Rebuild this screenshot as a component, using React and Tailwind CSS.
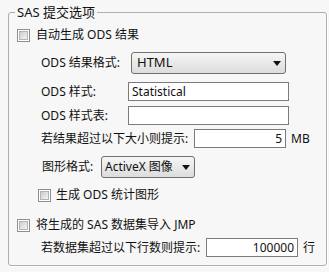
const font = { fontFamily: '"Noto Sans", "Noto Sans CJK SC", sans-serif' };

function Check() {
  return (
    <span className="flex h-[13px] w-[13px] shrink-0 items-center justify-center border border-[#8f8f8f] bg-white">
      <span className="h-[9px] w-[9px] border border-[#b4b4b4] bg-gradient-to-br from-[#cdcdcd] to-[#f4f4f4]" />
    </span>
  );
}

function Arrow() {
  return (
    <svg width="8" height="5" viewBox="0 0 8 5" className="shrink-0">
      <path d="M0 0h8L4 5z" fill="#111" />
    </svg>
  );
}

function Input({ value = "", right = false, className = "" }) {
  return (
    <div
      className={`flex h-[19px] items-center border border-[#7b7b7b] bg-white px-[3px] text-[12px] leading-none text-[#111] ${
        right ? "justify-end" : ""
      } ${className}`}
    >
      {value}
    </div>
  );
}

export default function App() {
  return (
    <div className="h-[272px] w-[329px] bg-[#f7f7f7] pt-[4px] pl-[8px] text-[12px] text-[#111]" style={font}>
      <fieldset className="h-[262px] w-[319px] rounded-[3px] border border-[#aeaeae] shadow-[1px_1px_0_#ffffff]">
        <legend className="ml-[6px] px-[2px] text-[13px] leading-[16px] text-[#111]">SAS 提交选项</legend>

        <div className="flex flex-col">
          <label className="mt-[7px] ml-[8px] flex h-[16px] items-center gap-[6px]">
            <Check />
            <span>自动生成 ODS 结果</span>
          </label>

          <div className="mt-[9px] ml-[32px] flex h-[22px] items-center">
            <span className="w-[90px]">ODS 结果格式:</span>
            <div className="flex h-[22px] w-[155px] items-center justify-between rounded-[3px] border border-[#707070] bg-gradient-to-b from-[#f6f6f6] to-[#dcdcdc] pr-[4px] pl-[5px]">
              <span className="text-[13px]">HTML</span>
              <Arrow />
            </div>
          </div>

          <div className="mt-[8px] ml-[32px] flex h-[19px] items-center">
            <span className="w-[87px]">ODS 样式:</span>
            <Input value="Statistical" className="w-[161px]" />
          </div>

          <div className="mt-[5px] ml-[32px] flex h-[19px] items-center">
            <span className="w-[87px]">ODS 样式表:</span>
            <Input className="w-[161px]" />
          </div>

          <div className="mt-[4px] ml-[32px] flex h-[19px] items-center">
            <span className="w-[153px]">若结果超过以下大小则提示:</span>
            <Input value="5" right className="w-[92px]" />
            <span className="ml-[5px]">MB</span>
          </div>

          <div className="mt-[8px] ml-[33px] flex h-[22px] items-center">
            <span className="w-[59px]">图形格式:</span>
            <div className="flex h-[22px] w-[94px] items-center justify-between rounded-[3px] border border-[#707070] bg-gradient-to-b from-[#f6f6f6] to-[#dcdcdc] pr-[4px] pl-[3px]">
              <span>ActiveX 图像</span>
              <Arrow />
            </div>
          </div>

          <label className="mt-[9px] ml-[29px] flex h-[16px] items-center gap-[5px]">
            <Check />
            <span>生成 ODS 统计图形</span>
          </label>

          <label className="mt-[14px] ml-[8px] flex h-[16px] items-center gap-[6px]">
            <Check />
            <span>将生成的 SAS 数据集导入 JMP</span>
          </label>

          <div className="mt-[5px] ml-[32px] flex h-[19px] items-center">
            <span className="w-[165px]">若数据集超过以下行数则提示:</span>
            <Input value="100000" right className="w-[92px]" />
            <span className="ml-[5px]">行</span>
          </div>
        </div>
      </fieldset>
    </div>
  );
}
